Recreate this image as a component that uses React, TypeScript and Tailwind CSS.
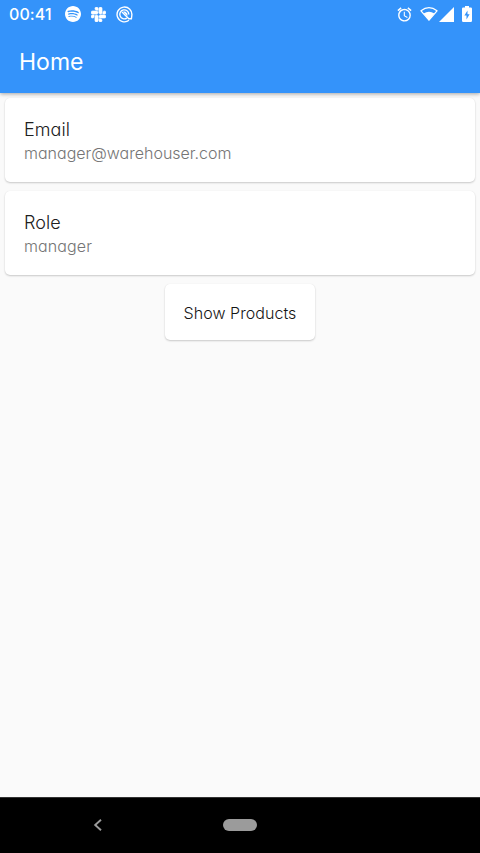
import React from "react";
import { SiSpotify, SiSlack } from "react-icons/si";
import { MdAlarm } from "react-icons/md";

const surface =
  "rounded-[5px] bg-white shadow-[0_1px_2px_rgba(0,0,0,0.2),0_0_1px_rgba(0,0,0,0.06)]";

function StatusBar() {
  return (
    <div className="flex h-7 items-center pl-[9px] pr-[8px]">
      <span className="w-[56px] whitespace-nowrap text-[16px] font-medium leading-7 tracking-[0.1px]">00:41</span>
      <SiSpotify className="size-4" />
      <SiSlack className="ml-[10px] size-[15px]" stroke="currentColor" strokeWidth="1" />
      <svg className="ml-[10px] size-[17px]" viewBox="0 0 17 17" fill="none" stroke="currentColor">
        <path d="M13 14.3A7.4 7.4 0 1 1 15.8 9.5L15.4 12.8h-2.6L6 6" strokeWidth="1.4" />
        <path d="M10.8 12.1A4.5 4.5 0 1 1 12.8 8.5" strokeWidth="1.4" />
        <path d="M7 5.6h2.2l2.2 2.2v2.4Z" fill="currentColor" stroke="none" />
      </svg>
      <MdAlarm className="ml-auto size-[17px]" />
      <svg className="ml-[7px] h-[14px] w-[18px]" viewBox="0 0 18 14">
        <path d="M1 3.8Q9-2.4 17 3.8L9 13.2Z" fill="none" stroke="currentColor" strokeWidth="1.3" strokeLinejoin="round" />
        <path d="M3.6 6.6Q9 3.1 14.4 6.6L9 13.2Z" fill="currentColor" />
      </svg>
      <svg className="ml-[1px] h-[15px] w-[15px]" viewBox="0 0 15 15" fill="currentColor">
        <path d="M15 0v15H0Z" />
      </svg>
      <svg className="ml-[8px] h-4 w-[10px]" viewBox="0 0 10 16">
        <path d="M3 0h4v1.6h1.8q1.2 0 1.2 1.2v12q0 1.2-1.2 1.2H1.2Q0 16 0 14.8v-12q0-1.2 1.2-1.2H3Z" fill="currentColor" />
        <path d="M5.5 4.5 2.4 9.4h2.1v4l3.1-5.2H5.5Z" fill="#3493fa" />
      </svg>
    </div>
  );
}

function InfoCard({ label, children }: { label: string; children: React.ReactNode }) {
  return (
    <section className={`h-[84px] pl-[19px] pt-[20px] font-light ${surface}`}>
      <h2 className="text-[18px] leading-6 tracking-[0.1px] text-[#202020]">{label}</h2>
      <p className="-mt-px whitespace-nowrap text-[16px] leading-6 text-[#757575]">{children}</p>
    </section>
  );
}

export default function App() {
  return (
    <div className="flex h-[853px] w-[480px] flex-col overflow-hidden bg-[#fafafa] font-['Inter','Liberation_Sans',sans-serif] [font-feature-settings:'cv11']">
      <header className="z-10 h-[93px] shrink-0 bg-[#3493fa] text-white shadow-[0_1px_4px_rgba(0,0,0,0.35)]">
        <StatusBar />
        <h1 className="pl-[19px] pt-[18px] text-[23px] font-normal leading-8">Home</h1>
      </header>
      <main className="flex flex-1 flex-col gap-[9px] px-[5px] pt-[5px]">
        <InfoCard label="Email">manager@warehouser.com</InfoCard>
        <InfoCard label="Role">
          <span className="tracking-[0.1px]">manager</span>
        </InfoCard>
        <button className={`h-14 w-[150px] self-center whitespace-nowrap pt-px text-[16px] font-[360] tracking-[0.05px] text-[#151515] ${surface}`}>
          Show Products
        </button>
      </main>
      <nav className="grid h-14 shrink-0 grid-cols-[1fr_34px_1fr] items-center border-t border-[#333] bg-black pb-px text-[#9b9b9b]">
        <svg className="ml-[93px] h-3 w-[9px]" viewBox="0 0 9 12" fill="none" stroke="currentColor" strokeWidth="1.9">
          <path d="M8 .8 2.2 6 8 11.2" />
        </svg>
        <span className="h-3 rounded-full bg-[#9b9b9b]" />
      </nav>
    </div>
  );
}
